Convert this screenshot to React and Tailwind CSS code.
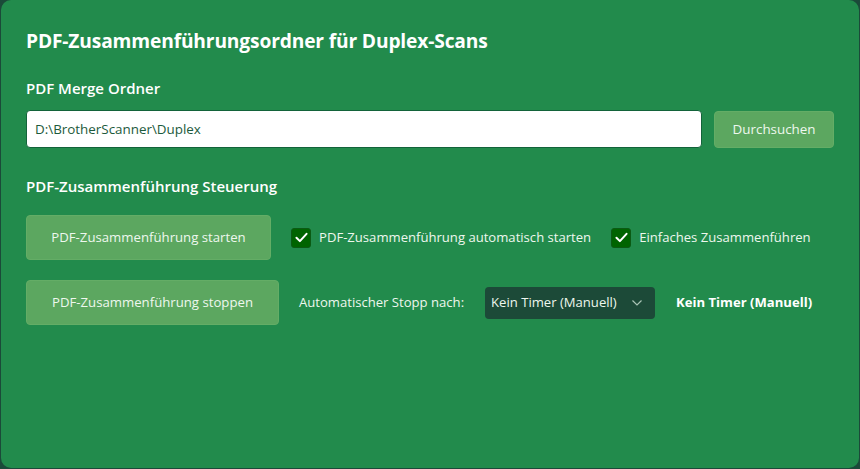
import React from "react";

function Check() {
  return (
    <span className="flex h-[20px] w-[20px] items-center justify-center rounded-[3px] bg-[#006400] border border-[#0b5a14]">
      <svg width="15" height="15" viewBox="0 0 14 14" fill="none">
        <path d="M2.3 7.3 L5.5 10.4 L11.7 3.6" stroke="white" strokeWidth="1.9" strokeLinecap="round" strokeLinejoin="round" />
      </svg>
    </span>
  );
}

export default function App() {
  return (
    <div className="h-[469px] w-[860px] bg-[#1b4a39] overflow-hidden" style={{ fontFamily: '"Open Sans", "Noto Sans", sans-serif' }}>
      <div className="h-[468px] w-[858px] ml-[1px] rounded-[10px] bg-[#228b4c] px-[25px] pt-[28px] text-white">
        <h1 className="text-[19.2px] font-bold leading-[26px] tracking-[-0.15px]">PDF-Zusammenführungsordner für Duplex-Scans</h1>
        <div className="mt-[24px] text-[15px] font-semibold leading-[20px]">PDF Merge Ordner</div>
        <div className="mt-[12px] flex items-center gap-[12px]">
          <div className="flex h-[38px] w-[677px] items-center rounded-[4px] border border-[#13633a] bg-white px-[8px] text-[13.4px] text-[#1c5a3c]">
            D:\BrotherScanner\Duplex
          </div>
          <button className="h-[37px] w-[120px] rounded-[4px] bg-[#5ca760] border border-[#64ad66] text-[13.4px] text-[#eef7ee]">Durchsuchen</button>
        </div>
        <div className="mt-[28px] text-[15px] font-semibold leading-[20px]">PDF-Zusammenführung Steuerung</div>
        <div className="mt-[19px] flex items-center">
          <button className="h-[45px] w-[245px] rounded-[4px] bg-[#5ca760] border border-[#64ad66] text-[13.2px] text-[#eef7ee]">PDF-Zusammenführung starten</button>
          <div className="ml-[20px] flex items-center gap-[8px]">
            <Check />
            <span className="text-[13.1px] text-[#eef7ee]">PDF-Zusammenführung automatisch starten</span>
          </div>
          <div className="ml-[20px] flex items-center gap-[8px]">
            <Check />
            <span className="text-[13.1px] text-[#eef7ee]">Einfaches Zusammenführen</span>
          </div>
        </div>
        <div className="mt-[20px] flex items-center">
          <button className="h-[45px] w-[253px] rounded-[4px] bg-[#5ca760] border border-[#64ad66] text-[13.2px] text-[#eef7ee]">PDF-Zusammenführung stoppen</button>
          <span className="ml-[20px] text-[13.1px] text-[#eef7ee]">Automatischer Stopp nach:</span>
          <div className="ml-[21px] flex h-[32px] w-[170px] items-center justify-between rounded-[4px] bg-[#1c4a38] pl-[6px] pr-[12px] text-[13.1px] text-[#eef7ee]">
            <span>Kein Timer (Manuell)</span>
            <svg width="12" height="8" viewBox="0 0 12 8" fill="none">
              <path d="M1.5 1.5 L6 6 L10.5 1.5" stroke="#a9c4b5" strokeWidth="1.2" />
            </svg>
          </div>
          <span className="ml-[21px] text-[13.1px] font-bold text-white">Kein Timer (Manuell)</span>
        </div>
      </div>
    </div>
  );
}
